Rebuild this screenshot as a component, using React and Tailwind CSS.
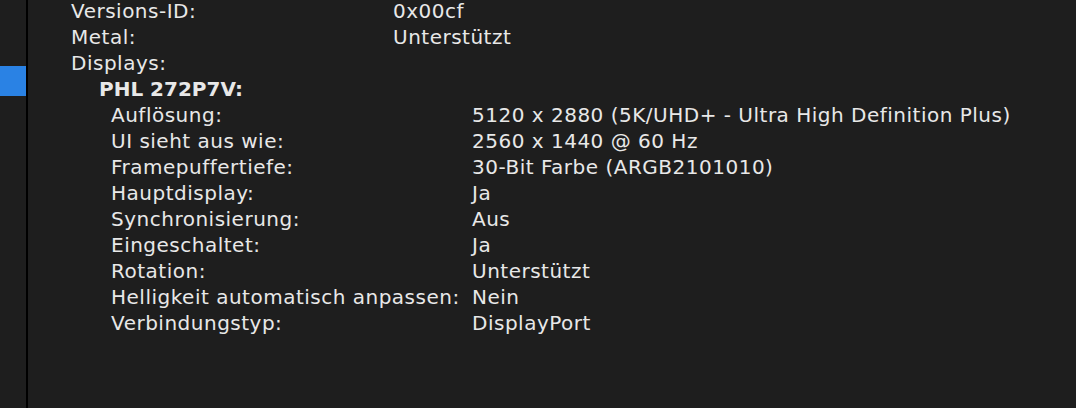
import React from 'react';

const top = [
  ['Versions-ID:', '0x00cf'],
  ['Metal:', 'Unterstützt'],
];

const display = [
  ['Auflösung:', '5120 x 2880 (5K/UHD+ - Ultra High Definition Plus)'],
  ['UI sieht aus wie:', '2560 x 1440 @ 60 Hz'],
  ['Framepuffertiefe:', '30-Bit Farbe (ARGB2101010)'],
  ['Hauptdisplay:', 'Ja'],
  ['Synchronisierung:', 'Aus'],
  ['Eingeschaltet:', 'Ja'],
  ['Rotation:', 'Unterstützt'],
  ['Helligkeit automatisch anpassen:', 'Nein'],
  ['Verbindungstyp:', 'DisplayPort'],
];

export default function App() {
  return (
    <div className="flex h-[408px] w-[1076px] overflow-hidden bg-[#1e1e1e] text-[20px] leading-[26px] tracking-[0.5px] text-[#e8e8e8]" style={{ fontFamily: '"DejaVu Sans", sans-serif' }}>
      {/* sidebar sliver */}
      <div className="w-[26px] shrink-0 pt-[66px]">
        <div className="h-[30px] bg-[#2a82e4]" />
      </div>
      <div className="w-[2px] shrink-0 bg-black" />

      <div className="flex-1 -mt-[2px] pl-[43px] whitespace-nowrap">
        {top.map(([k, v]) => (
          <div key={k} className="flex">
            <div className="w-[322px] shrink-0">{k}</div>
            <div>{v}</div>
          </div>
        ))}
        <div>Displays:</div>
        <div className="pl-[28px] font-bold tracking-normal">PHL 272P7V:</div>
        {display.map(([k, v]) => (
          <div key={k} className="flex pl-[40px]">
            <div className="w-[361px] shrink-0">{k}</div>
            <div>{v}</div>
          </div>
        ))}
      </div>
    </div>
  );
}
